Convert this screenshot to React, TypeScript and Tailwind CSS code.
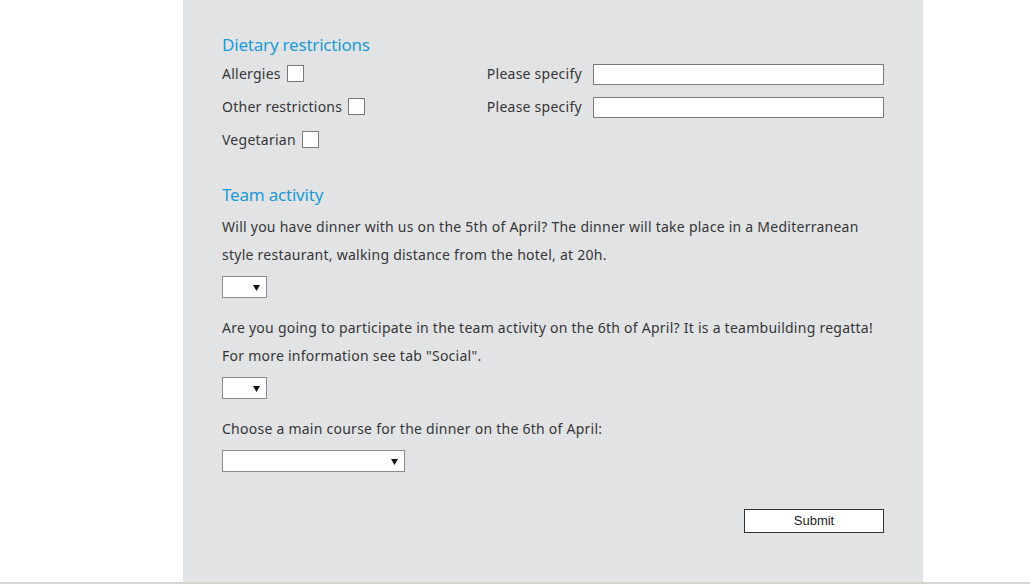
import React from "react";

const font = { fontFamily: '"Noto Sans", "DejaVu Sans", sans-serif' };

function Checkbox() {
  return <span className="inline-block w-[17px] h-[17px] bg-white border border-[#7a7a7a] ml-[6px]" />;
}

function TextInput() {
  return (
    <input
      type="text"
      className="w-[291px] h-[21px] bg-white border border-[#7a7a7a] outline-none"
    />
  );
}

function Select({ width }: { width: string }) {
  return (
    <div className={`relative h-[22px] bg-white border border-[#8a8a8a] ${width}`}>
      <select className="appearance-none w-full h-full bg-transparent outline-none" />
      <svg
        className="pointer-events-none absolute right-[6px] top-[8px]"
        width="7"
        height="6"
        viewBox="0 0 7 6"
      >
        <path d="M0 0h7L3.5 6z" fill="#111" />
      </svg>
    </div>
  );
}

export default function App() {
  return (
    <div className="w-[1030px] h-[585px] bg-white overflow-hidden" style={font}>
      <div className="ml-[183px] w-[740px] h-[582px] bg-[#e2e3e5] px-[39px] pt-[35px] text-[14px] text-[#363636] tracking-[0.25px]">
        <h2 className="h-[20px] leading-[20px] text-[17px] text-[#1a9ad6] tracking-[-0.2px]">
          Dietary restrictions
        </h2>
        <div className="mt-[3px]">
          <div className="flex h-[33px] items-center">
            <div className="w-[40%] flex items-center pb-[2px]">
              Allergies
              <Checkbox />
            </div>
            <div className="flex-1 flex items-center justify-between">
              <span className="pb-[2px]">Please specify</span>
              <TextInput />
            </div>
          </div>
          <div className="flex h-[33px] items-center">
            <div className="w-[40%] flex items-center pb-[2px]">
              Other restrictions
              <Checkbox />
            </div>
            <div className="flex-1 flex items-center justify-between">
              <span className="pb-[2px]">Please specify</span>
              <TextInput />
            </div>
          </div>
          <div className="flex h-[33px] items-center">
            <div className="w-[40%] flex items-center pb-[2px]">
              Vegetarian
              <Checkbox />
            </div>
          </div>
        </div>

        <h2 className="mt-[28px] h-[20px] leading-[20px] text-[17px] text-[#1a9ad6] tracking-[-0.2px]">
          Team activity
        </h2>
        <p className="mt-[8px] leading-[28px]">
          Will you have dinner with us on the 5th of April? The dinner will take place in a Mediterranean
          <br />
          style restaurant, walking distance from the hotel, at 20h.
        </p>
        <div className="mt-[7px]">
          <Select width="w-[45px]" />
        </div>
        <p className="mt-[16px] leading-[28px]">
          Are you going to participate in the team activity on the 6th of April? It is a teambuilding regatta!
          <br />
          For more information see tab "Social".
        </p>
        <div className="mt-[7px]">
          <Select width="w-[45px]" />
        </div>
        <p className="mt-[16px] leading-[28px]">Choose a main course for the dinner on the 6th of April:</p>
        <div className="mt-[7px]">
          <Select width="w-[183px]" />
        </div>
        <div className="mt-[37px] flex justify-end">
          <button
            className="w-[140px] h-[24px] bg-white border border-[#333] text-[13px] text-[#222] tracking-normal"
            style={{ fontFamily: '"Liberation Sans", Arial, sans-serif' }}
          >
            Submit
          </button>
        </div>
      </div>
      <div className="h-[2px] bg-[#d6d6d0]" />
    </div>
  );
}
